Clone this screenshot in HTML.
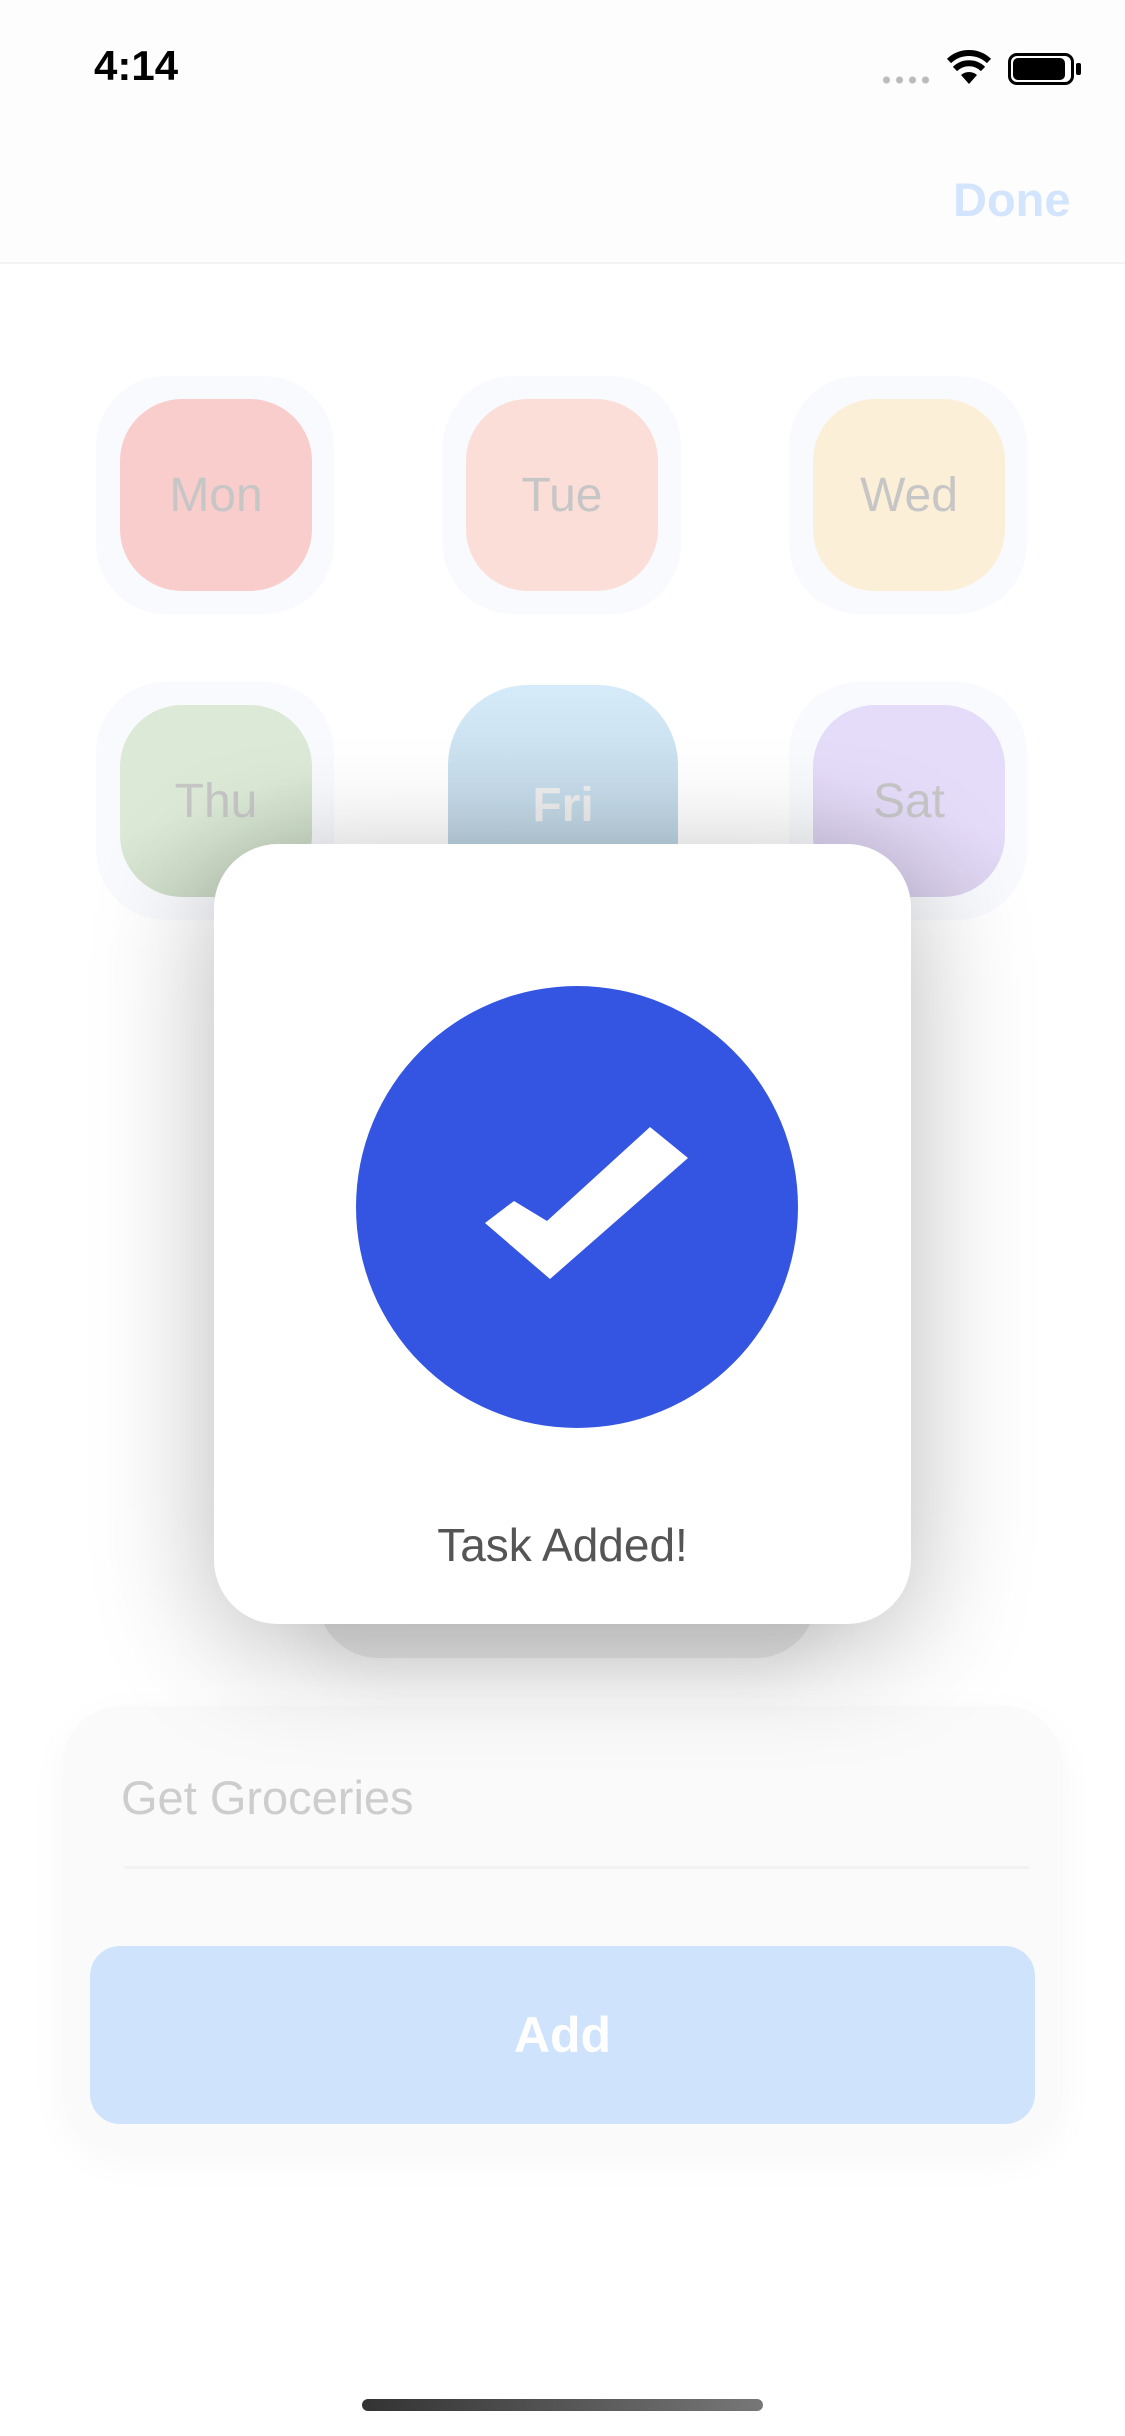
<!DOCTYPE html>
<html><head><meta charset="utf-8"><style>
*{margin:0;padding:0;box-sizing:border-box}
body{width:1125px;height:2436px;background:#fff;position:relative;overflow:hidden;font-family:"Liberation Sans",sans-serif}
.a{position:absolute}
.outer{position:absolute;width:238px;height:238px;border-radius:70px;background:#f8fafd}
.tile{position:absolute;width:192px;height:192px;border-radius:62px;display:flex;align-items:center;justify-content:center;font-size:48px;color:#c6c6c6}
</style></head><body>
<div class="a" style="left:0;top:0;width:1125px;height:264px;background:#fdfdfd;border-bottom:2px solid #f3f3f3"></div>
<div class="a" style="left:94px;top:42px;font-size:42px;font-weight:bold;color:#000">4:14</div>
<div class="a" style="left:880px;top:76px;width:52px;height:8px;background:radial-gradient(circle,#bbb 3px,transparent 4px) 0 0/13px 8px"></div>
<svg class="a" style="left:947px;top:50px" width="44" height="34" viewBox="0 0 44 34"><path d="M22 34 L14 25 A12 12 0 0 1 30 25 Z" fill="#000"/><path d="M8 19 A20 20 0 0 1 36 19" stroke="#000" stroke-width="6" fill="none"/><path d="M2 11 A29 29 0 0 1 42 11" stroke="#000" stroke-width="6" fill="none"/></svg>
<div class="a" style="left:1008px;top:53px;width:66px;height:32px;border:3px solid #000;border-radius:9px"></div>
<div class="a" style="left:1013px;top:58px;width:52px;height:22px;background:#000;border-radius:5px"></div>
<div class="a" style="left:1076px;top:63px;width:5px;height:12px;background:#000;border-radius:2px"></div>
<div class="a" style="left:953px;top:172px;font-size:47px;font-weight:bold;color:#d3e5fd">Done</div>

<div class="outer" style="left:96px;top:376px"></div><div class="tile" style="left:120px;top:399px;background:#f8cdcc">Mon</div>
<div class="outer" style="left:443px;top:376px"></div><div class="tile" style="left:466px;top:399px;background:#fbded7">Tue</div>
<div class="outer" style="left:789px;top:376px"></div><div class="tile" style="left:813px;top:399px;background:#fcefd7">Wed</div>
<div class="outer" style="left:96px;top:682px"></div><div class="tile" style="left:120px;top:705px;background:linear-gradient(160deg,#dbe9d6 50%,#c4d2bf)">Thu</div>
<div class="tile" style="left:448px;top:685px;width:230px;height:240px;border-radius:80px;background:linear-gradient(#d6ebfa,#b2c8d6);color:#eee;font-weight:bold">Fri</div>
<div class="outer" style="left:789px;top:682px"></div><div class="tile" style="left:813px;top:705px;background:linear-gradient(200deg,#e5dcf9 50%,#d3c9e6)">Sat</div>

<div class="a" style="left:62px;top:1706px;width:1001px;height:446px;border-radius:60px;background:#fafafa;box-shadow:0 10px 40px rgba(0,0,0,0.03)"></div>
<div class="a" style="left:121px;top:1770px;font-size:47px;color:#cdcdcd">Get Groceries</div>
<div class="a" style="left:124px;top:1866px;width:905px;height:3px;background:#f2f2f2"></div>
<div class="a" style="left:90px;top:1946px;width:945px;height:178px;border-radius:30px;background:#cfe3fd;color:#fff;font-size:50px;font-weight:bold;display:flex;align-items:center;justify-content:center">Add</div>

<div class="a" style="left:318px;top:1500px;width:498px;height:158px;border-radius:60px;background:#e6e6e6;box-shadow:0 20px 60px rgba(0,0,0,0.06)"></div>
<div class="a" style="left:214px;top:844px;width:697px;height:780px;border-radius:64px;background:#fff;box-shadow:0 20px 120px rgba(0,0,0,0.28)"></div>
<svg class="a" style="left:0;top:0" width="1125" height="2436"><circle cx="577" cy="1207" r="221" fill="#3455e2"/><path d="M485 1223 L514 1201 L547 1221 L650 1127 L688 1158 L550 1279 Z" fill="#fff"/></svg>
<div class="a" style="left:214px;top:1518px;width:697px;text-align:center;font-size:46px;color:#555">Task Added!</div>

<div class="a" style="left:362px;top:2399px;width:401px;height:12px;border-radius:6px;background:linear-gradient(90deg,#333,#777)"></div>
</body></html>
